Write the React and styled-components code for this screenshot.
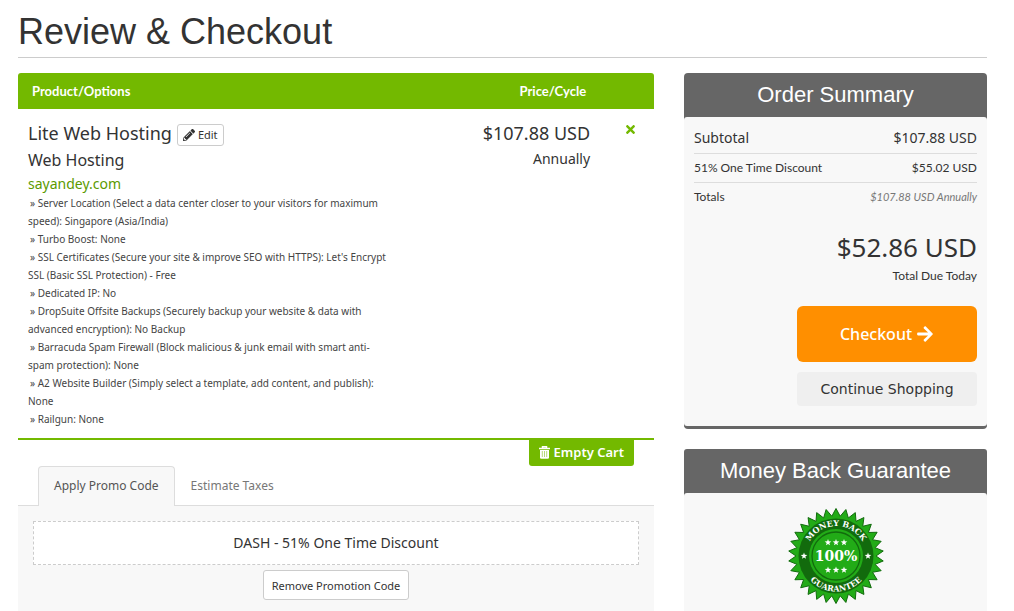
import styled, { createGlobalStyle } from "styled-components"
import { FaArrowRight, FaPencilAlt, FaTimes } from "react-icons/fa"

const GlobalStyle = createGlobalStyle`
    * {
        box-sizing: border-box;
    }
    body {
        margin: 0;
        background-color: white;
        color: #333;
        font-family: "Noto Sans", "Open Sans", sans-serif;
        font-size: 13px;
    }
    button {
        font-family: inherit;
        cursor: pointer;
    }
`

const Container = styled.div`
    display: flex;
    flex-direction: column;
    min-height: 100vh;
    padding: 0 27px 0 18px;
`

const Title = styled.h1`
    margin: 0 0 15px;
    padding: 8px 0 2px;
    border-bottom: 1px solid #ccc;
    font-family: "Liberation Sans", Arial, sans-serif;
    font-size: 36px;
    font-weight: 400;
    line-height: 47px;
`

const Columns = styled.div`
    flex: 1;
    display: grid;
    grid-template-columns: minmax(0, 212fr) minmax(0, 101fr);
    gap: 30px;
`

const Main = styled.main`
    display: flex;
    flex-direction: column;
`

const Items = styled.table`
    width: 100%;
    border-collapse: collapse;
    table-layout: fixed;
    border-bottom: 2px solid #73b900;
`

const HeadCell = styled.th`
    width: ${props=>props.$width};
    height: 36px;
    padding: ${props=>props.$right ? "0 17px" : "0 14px"};
    background-color: #73b900;
    color: white;
    font-family: Lato, sans-serif;
    font-size: 13px;
    font-weight: 700;
    text-align: ${props=>props.$right ? "right" : "left"};

    &:first-child {
        border-top-left-radius: 3px;
    }
    &:last-child {
        border-top-right-radius: 3px;
    }
`

const Cell = styled.td`
    padding: 10px;
    padding-right: ${props=>props.$align === "right" ? "13px" : "8px"};
    vertical-align: top;
    text-align: ${props=>props.$align || "left"};
`

const ProductTitle = styled.div`
    display: flex;
    align-items: center;
    gap: 5px;
    font-size: 18px;
    line-height: 28px;
`

const EditButton = styled.button`
    display: flex;
    align-items: center;
    gap: 3px;
    height: 22px;
    margin-top: 3px;
    padding: 0 5px;
    border: 1px solid #ccc;
    border-radius: 3px;
    background-color: white;
    color: #333;
    font-size: 11px;
`

const ProductGroup = styled.div`
    font-size: 16px;
    line-height: 27px;
`

const Domain = styled.a`
    display: block;
    color: #5c9a00;
    font-size: 14px;
    line-height: 19px;
    text-decoration: none;
`

const Options = styled.ul`
    margin: 0;
    padding: 1px 0 0;
    list-style: none;
    color: #444;
    font-size: 10px;
    line-height: 18px;

    li {
        text-indent: 2px;
    }
`

const Price = styled.div`
    font-size: 18px;
    line-height: 28px;
`

const Cycle = styled.div`
    font-size: 14px;
    line-height: 24px;
`

const RemoveButton = styled.button`
    padding: 4px 0 5px 2px;
    border: none;
    background: none;
    color: #73b900;
    font-size: 13px;
    line-height: 0;
`

const EmptyRow = styled.div`
    display: flex;
    justify-content: flex-end;
    padding-right: 20px;
`

const EmptyButton = styled.button`
    display: flex;
    align-items: center;
    gap: 4px;
    height: 26px;
    padding: 0 10px 2px;
    border: none;
    border-radius: 0 0 3px 3px;
    background-color: #73b900;
    color: white;
    font-size: 13px;
    font-weight: 600;
`

const Tabs = styled.div`
    display: flex;
    padding: 0 20px;
    border-bottom: 1px solid #ddd;
`

const Tab = styled.button`
    height: 40px;
    margin-bottom: -1px;
    padding: 0 15px 2px;
    border: 1px solid ${props=>props.$active ? "#ddd" : "transparent"};
    border-bottom: none;
    border-radius: 4px 4px 0 0;
    background-color: ${props=>props.$active ? "#f8f8f8" : "transparent"};
    color: ${props=>props.$active ? "#555" : "#777"};
    font-size: 12px;
`

const TabPanel = styled.div`
    flex: 1;
    display: flex;
    flex-direction: column;
    align-items: center;
    gap: 5px;
    padding: 15px 15px 10px;
    background-color: #f8f8f8;
`

const Promo = styled.div`
    width: 100%;
    border: 1px dashed #ccc;
    background-color: white;
    font-size: 14px;
    line-height: 42px;
    text-align: center;
`

const RemovePromo = styled.button`
    height: 30px;
    padding: 0 8px;
    border: 1px solid #ccc;
    border-radius: 3px;
    background-color: white;
    color: #333;
    font-size: 11px;
`

const Sidebar = styled.aside`
    display: flex;
    flex-direction: column;
    gap: 20px;
`

const Card = styled.section`
    flex: ${props=>props.$grow ? "1" : "none"};
    display: flex;
    flex-direction: column;
    border-bottom: ${props=>props.$grow ? "none" : "3px solid #666"};
    border-radius: ${props=>props.$grow ? "3px 3px 0 0" : "4px"};
    background-color: #666;
`

const CardTitle = styled.h2`
    margin: 0;
    color: white;
    font-family: "Liberation Sans", Arial, sans-serif;
    font-size: 22px;
    font-weight: 400;
    line-height: 44px;
    text-align: center;
`

const CardBody = styled.div`
    flex: 1;
    padding: 6px 10px 20px;
    border-radius: 3px;
    background-color: #f8f8f8;
`

const Line = styled.div`
    display: flex;
    align-items: center;
    justify-content: space-between;
    height: ${props=>props.$first ? "31px" : "29px"};
    padding-bottom: ${props=>props.$first ? "1px" : "2px"};
    border-bottom: 1px solid ${props=>props.$last ? "transparent" : "#ddd"};
    font-family: ${props=>props.$first ? "inherit" : "Lato, sans-serif"};
    font-size: ${props=>props.$first ? "14px" : "12px"};
`

const Recurring = styled.em`
    color: #777;
    font-size: 11px;
`

const Due = styled.div`
    padding-top: 17px;
    font-size: 26px;
    line-height: 36px;
    text-align: right;
`

const DueLabel = styled.div`
    font-family: Lato, sans-serif;
    font-size: 12px;
    line-height: 22px;
    text-align: right;
`

const Actions = styled.div`
    display: flex;
    flex-direction: column;
    align-items: flex-end;
    gap: 10px;
    padding-top: 19px;
`

const Checkout = styled.button`
    display: flex;
    align-items: center;
    justify-content: center;
    gap: 4px;
    width: 180px;
    height: 56px;
    border: none;
    border-radius: 6px;
    background-color: #ff8f00;
    color: white;
    font-size: 16px;
    font-weight: 500;
`

const Continue = styled.a`
    width: 180px;
    border-radius: 4px;
    background-color: #efefef;
    color: #333;
    font-family: "DejaVu Sans", Verdana, sans-serif;
    font-size: 14px;
    line-height: 34px;
    text-align: center;
    text-decoration: none;
`

const SealBox = styled.div`
    display: flex;
    justify-content: center;
    padding-top: 9px;
`

const options = [
    "Server Location (Select a data center closer to your visitors for maximum speed): Singapore (Asia/India)",
    "Turbo Boost: None",
    "SSL Certificates (Secure your site & improve SEO with HTTPS): Let's Encrypt SSL (Basic SSL Protection) - Free",
    "Dedicated IP: No",
    "DropSuite Offsite Backups (Securely backup your website & data with advanced encryption): No Backup",
    "Barracuda Spam Firewall (Block malicious & junk email with smart anti-spam protection): None",
    "A2 Website Builder (Simply select a template, add content, and publish): None",
    "Railgun: None",
]

// points alternate between an outer and an inner radius
const burst = (cx, cy, count, outer, inner) =>
    Array.from({ length: count * 2 }, (_, i) => {
        const r = i % 2 ? inner : outer
        const a = (Math.PI * i) / count - Math.PI / 2
        return `${(cx + r * Math.cos(a)).toFixed(2)},${(cy + r * Math.sin(a)).toFixed(2)}`
    }).join(" ")

const stars = [
    [40, 34.5], [48, 34.5], [56, 34.5],
    [40, 62], [48, 62], [56, 62],
    [16, 48], [80, 48],
]

const TrashIcon = () => (
    <svg width="11" height="13" viewBox="0 0 11 13" fill="none" stroke="white" aria-hidden="true">
        <path d="M0 2.5h11M3.5 1.8V.7h4v1.1" strokeWidth="1.5" />
        <path d="M1 4h9v7.5a1.3 1.3 0 0 1-1.3 1.3H2.3A1.3 1.3 0 0 1 1 11.5z" fill="white" stroke="none" />
        <path d="M3.3 5v6M5.5 5v6M7.7 5v6" stroke="#a3d055" strokeWidth=".8" />
    </svg>
)

const Seal = () => (
    <svg width="96" height="96" viewBox="0 0 96 96" role="img" aria-label="100% money back guarantee">
        <defs>
            <path id="arcTop" d="M18 48a30 30 0 0 1 60 0" />
            <path id="arcBottom" d="M12.5 48a35.5 35.5 0 0 0 71 0" />
        </defs>
        <polygon points={burst(48, 48, 30, 47.5, 40)} fill="#22ab17" stroke="#126b0d" strokeWidth="1" />
        <circle cx="48" cy="48" r="37.5" fill="#126b0d" />
        <circle cx="48" cy="48" r="27" fill="#22ab17" />
        <circle cx="48" cy="48" r="24" fill="none" stroke="#126b0d" strokeWidth="1.3" />
        {stars.map(([x, y]) => (
            <polygon key={`${x}-${y}`} points={burst(x, y, 5, 3.5, 1.4)} fill="white" />
        ))}
        <g fill="white" fontFamily="'DejaVu Serif', serif" fontWeight="700" textAnchor="middle">
            <text x="48" y="53" fontSize="14">100%</text>
            <text fontSize="8"><textPath href="#arcTop" startOffset="50%">MONEY BACK</textPath></text>
            <text fontSize="8"><textPath href="#arcBottom" startOffset="50%">GUARANTEE</textPath></text>
        </g>
    </svg>
)

const App = () => {
  return (
    <Container>
        <GlobalStyle />
        <Title>Review & Checkout</Title>
        <Columns>
            <Main>
                <Items>
                    <thead>
                        <tr>
                            <HeadCell $width="60%">Product/Options</HeadCell>
                            <HeadCell $width="32%" $right>Price/Cycle</HeadCell>
                            <HeadCell $width="8%" aria-label="Remove" />
                        </tr>
                    </thead>
                    <tbody>
                        <tr>
                            <Cell>
                                <ProductTitle>
                                    Lite Web Hosting
                                    <EditButton><FaPencilAlt size={12} />Edit</EditButton>
                                </ProductTitle>
                                <ProductGroup>Web Hosting</ProductGroup>
                                <Domain href="#domain">sayandey.com</Domain>
                                <Options>
                                    {options.map(option=>(
                                        <li key={option}>{`» ${option}`}</li>
                                    ))}
                                </Options>
                            </Cell>
                            <Cell $align="right">
                                <Price>$107.88 USD</Price>
                                <Cycle>Annually</Cycle>
                            </Cell>
                            <Cell $align="center">
                                <RemoveButton aria-label="Remove item"><FaTimes /></RemoveButton>
                            </Cell>
                        </tr>
                    </tbody>
                </Items>
                <EmptyRow>
                    <EmptyButton><TrashIcon />Empty Cart</EmptyButton>
                </EmptyRow>
                <Tabs role="tablist">
                    <Tab role="tab" aria-selected="true" $active>Apply Promo Code</Tab>
                    <Tab role="tab" aria-selected="false">Estimate Taxes</Tab>
                </Tabs>
                <TabPanel role="tabpanel">
                    <Promo>DASH - 51% One Time Discount</Promo>
                    <RemovePromo>Remove Promotion Code</RemovePromo>
                </TabPanel>
            </Main>
            <Sidebar>
                <Card>
                    <CardTitle>Order Summary</CardTitle>
                    <CardBody>
                        <Line $first><span>Subtotal</span><span>$107.88 USD</span></Line>
                        <Line><span>51% One Time Discount</span><span>$55.02 USD</span></Line>
                        <Line $last><span>Totals</span><Recurring>$107.88 USD Annually</Recurring></Line>
                        <Due>$52.86 USD</Due>
                        <DueLabel>Total Due Today</DueLabel>
                        <Actions>
                            <Checkout>Checkout<FaArrowRight size={18} /></Checkout>
                            <Continue href="#shop">Continue Shopping</Continue>
                        </Actions>
                    </CardBody>
                </Card>
                <Card $grow>
                    <CardTitle>Money Back Guarantee</CardTitle>
                    <CardBody>
                        <SealBox><Seal /></SealBox>
                    </CardBody>
                </Card>
            </Sidebar>
        </Columns>
    </Container>
  )
}

export default App
